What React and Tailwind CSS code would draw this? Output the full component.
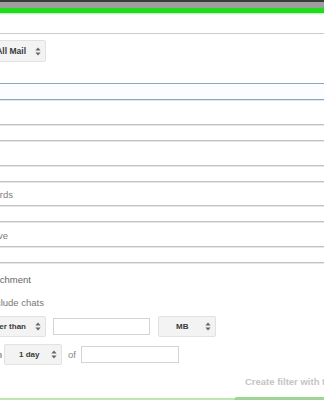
import React from "react";

function Arrows() {
  return (
    <svg width="6" height="9" viewBox="0 0 6 9" className="shrink-0">
      <path d="M3 0.5 L5.6 3.6 L0.4 3.6 Z" fill="#666" />
      <path d="M3 8.5 L5.6 5.4 L0.4 5.4 Z" fill="#666" />
    </svg>
  );
}

const line = "border-t border-[#c2c2c2] shadow-[inset_0_1px_0_#e6e6e6]";

export default function App() {
  return (
    <div
      className="w-[324px] h-[400px] overflow-hidden bg-white flex flex-col"
      style={{ fontFamily: '"Liberation Sans", Arial, sans-serif' }}
    >
      {/* top bars */}
      <div className="h-[2px] bg-[#3a3a3a] shrink-0" />
      <div className="h-[6px] bg-[#9d9d9d] shrink-0" />
      <div className="h-[5px] bg-[#20dc20] shrink-0" />
      <div className="h-[2px] bg-gradient-to-b from-[#aef0a8] to-white shrink-0" />
      <div className="h-[18px] shrink-0" />

      {/* search select */}
      <div className="h-[50px] shrink-0 border-t border-[#cacaca] pt-[6px]">
        <div className="h-[22px] w-[60px] -ml-[14px] flex items-center justify-end gap-[9px] pr-[4px] bg-[#f3f3f3] border border-[#e2e2e2] rounded-[2px]">
          <span className="text-[8.5px] font-bold text-[#3a3a3a] leading-none">All Mail</span>
          <Arrows />
        </div>
      </div>

      {/* inputs */}
      <div className="h-[16px] shrink-0 border-t border-[#8fa3c2] bg-[#fbfdff]" />
      <div className="h-[25px] shrink-0 border-t border-[#8fa3c2] shadow-[inset_0_1px_0_#dce8f8]" />
      <div className={`h-[16px] shrink-0 ${line}`} />
      <div className={`h-[25px] shrink-0 ${line}`} />
      <div className={`h-[16px] shrink-0 ${line}`} />
      <div className={`h-[24px] shrink-0 ${line} flex items-center pt-[2px]`}>
        <span className="w-[80px] -ml-[67px] text-right text-[9.5px] text-[#7d7d7d] leading-none">Has the words</span>
      </div>
      <div className={`h-[16px] shrink-0 ${line}`} />
      <div className={`h-[25px] shrink-0 ${line} flex items-center pt-[4px]`}>
        <span className="w-[80px] -ml-[72px] text-right text-[9.5px] text-[#7d7d7d] leading-none">Doesn't have</span>
      </div>
      <div className={`h-[16px] shrink-0 ${line}`} />

      <div className={`shrink-0 ${line} pt-[11px] flex flex-col`}>
        <div className="h-[12px] flex items-center">
          <span className="w-[100px] -ml-[69px] text-right text-[9.5px] text-[#666] leading-none whitespace-nowrap">Has attachment</span>
        </div>
        <div className="h-[12px] mt-[11px] flex items-center">
          <span className="w-[120px] -ml-[76px] text-right text-[9.5px] text-[#777] leading-none whitespace-nowrap">Don't include chats</span>
        </div>

        {/* size row */}
        <div className="h-[21px] mt-[7px] flex items-center">
          <div className="h-[21px] w-[76px] -ml-[30px] flex items-center justify-end gap-[9px] pr-[4px] bg-[#f3f3f3] border border-[#e2e2e2] rounded-[2px]">
            <span className="text-[8px] font-bold text-[#3a3a3a] leading-none whitespace-nowrap">greater than</span>
            <Arrows />
          </div>
          <div className="ml-[7px] w-[97px] h-[17px] border border-[#d4d4d4] bg-white" />
          <div className="ml-[8px] h-[21px] w-[58px] flex items-center pl-[17px] pr-[4px] bg-[#f3f3f3] border border-[#e2e2e2] rounded-[2px]">
            <span className="text-[8px] font-bold text-[#3a3a3a] leading-none">MB</span>
            <span className="ml-auto"><Arrows /></span>
          </div>
        </div>

        {/* date row */}
        <div className="h-[21px] mt-[7px] flex items-center">
          <span className="w-[30px] -ml-[28px] text-right text-[9.5px] text-[#555] leading-none overflow-hidden whitespace-nowrap">in</span>
          <div className="ml-[2px] h-[21px] w-[58px] flex items-center pl-[14px] pr-[4px] bg-[#f3f3f3] border border-[#e2e2e2] rounded-[2px]">
            <span className="text-[8px] font-bold text-[#3a3a3a] leading-none whitespace-nowrap">1 day</span>
            <span className="ml-auto"><Arrows /></span>
          </div>
          <span className="ml-[6px] text-[9.5px] text-[#888] leading-none">of</span>
          <div className="ml-[5px] w-[98px] h-[17px] border border-[#d4d4d4] bg-white" />
        </div>

        {/* button row */}
        <div className="h-[19px] mt-[7px] flex items-center">
          <div className="w-[6px] h-[19px] bg-[#4a89f0] rounded-r-[2px]" />
          <span className="ml-[245px] text-[9.5px] font-bold text-[#c4c4c4] leading-none whitespace-nowrap">Create filter with this search</span>
        </div>

        {/* bottom green */}
        <div className="h-[3px] mt-[6px] flex">
          <div className="w-[234px] h-[3px] mt-[1px] bg-[#bde8b2]" />
          <div className="flex-1 h-[3px] bg-[#9fd496] rounded-tl-[3px]" />
        </div>
      </div>
    </div>
  );
}
